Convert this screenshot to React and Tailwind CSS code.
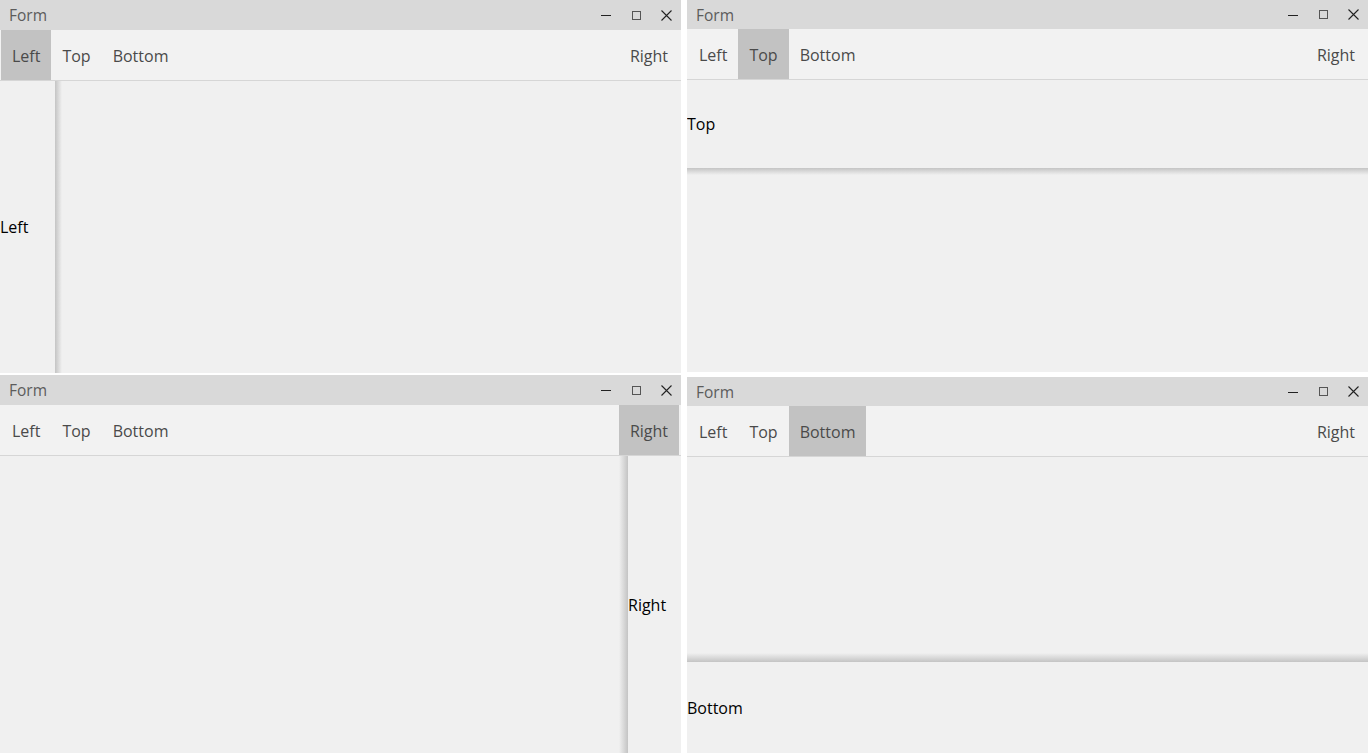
import React from 'react';

const font = { fontFamily: '"Open Sans", "Noto Sans", sans-serif' };

const TitleBar = ({ tall }) => (
  <div className={`flex items-center bg-[#d9d9d9] ${tall ? 'h-[30px]' : 'h-[29px]'}`}>
    <span className="pl-[9px] pt-[2px] text-[15.5px] text-[#5c5c5c] flex-1">Form</span>
    <div className="flex">
      <button className="w-[30px] h-[29px] flex items-center justify-center">
        <svg width="10" height="10" viewBox="0 0 10 10"><path d="M0 5.5h10" stroke="#222" strokeWidth="1" /></svg>
      </button>
      <button className="w-[30px] h-[29px] flex items-center justify-center">
        <svg width="9" height="9" viewBox="0 0 9 9"><rect x="0.5" y="0.5" width="8" height="8" fill="none" stroke="#555" strokeWidth="1" /></svg>
      </button>
      <button className="w-[30px] h-[29px] flex items-center justify-center">
        <svg width="11" height="11" viewBox="0 0 11 11"><path d="M0.5 0.5l10 10M10.5 0.5l-10 10" stroke="#222" strokeWidth="1.1" /></svg>
      </button>
    </div>
  </div>
);

const NavItem = ({ label, active }) => (
  <div className={`h-full flex items-center pt-px text-[16px] text-[#4a4a4a] px-[11px] ${active ? 'bg-[#c2c2c2]' : ''}`}>
    {label}
  </div>
);

const NavBar = ({ active }) => (
  <div className="h-[51px] flex bg-[#f2f2f2] border-b border-[#d6d6d6] pl-px pr-[2px]">
    <NavItem label="Left" active={active === 'Left'} />
    <NavItem label="Top" active={active === 'Top'} />
    <NavItem label="Bottom" active={active === 'Bottom'} />
    <div className="flex-1" />
    <NavItem label="Right" active={active === 'Right'} />
  </div>
);

const Body = ({ active }) => {
  if (active === 'Left') {
    return (
      <div className="flex-1 flex bg-[#f0f0f0]">
        <div className="w-[55px] flex items-center text-[16px] text-black">Left</div>
        <div className="w-[7px] bg-gradient-to-r from-[#c4c4c4] to-[#f0f0f0]" />
        <div className="flex-1" />
      </div>
    );
  }
  if (active === 'Top') {
    return (
      <div className="flex-1 flex flex-col bg-[#f0f0f0]">
        <div className="h-[88px] flex items-center text-[16px] text-black">Top</div>
        <div className="h-[7px] bg-gradient-to-b from-[#c4c4c4] to-[#f0f0f0]" />
        <div className="flex-1" />
      </div>
    );
  }
  if (active === 'Right') {
    return (
      <div className="flex-1 flex bg-[#f0f0f0]">
        <div className="flex-1" />
        <div className="w-[9px] bg-gradient-to-r from-[#f0f0f0] to-[#c4c4c4]" />
        <div className="w-[53px] flex items-center text-[16px] text-black">Right</div>
      </div>
    );
  }
  return (
    <div className="flex-1 flex flex-col bg-[#f0f0f0]">
      <div className="flex-1" />
      <div className="h-[9px] bg-gradient-to-b from-[#f0f0f0] to-[#c4c4c4]" />
      <div className="h-[91px] flex items-center text-[16px] text-black">Bottom</div>
    </div>
  );
};

const Window = ({ active, tall, className }) => (
  <div className={`flex flex-col bg-[#f0f0f0] overflow-hidden ${className}`}>
    <TitleBar tall={tall} />
    <NavBar active={active} />
    <Body active={active} />
  </div>
);

export default function App() {
  return (
    <div className="w-[1371px] h-[753px] bg-white flex gap-[6px] pr-[3px]" style={font}>
      <div className="w-[681px] flex flex-col gap-[2px]">
        <Window active="Left" tall className="h-[373px]" />
        <Window active="Right" tall className="flex-1" />
      </div>
      <div className="w-[681px] flex flex-col gap-[5px]">
        <Window active="Top" className="h-[372px]" />
        <Window active="Bottom" className="flex-1" />
      </div>
    </div>
  );
}
